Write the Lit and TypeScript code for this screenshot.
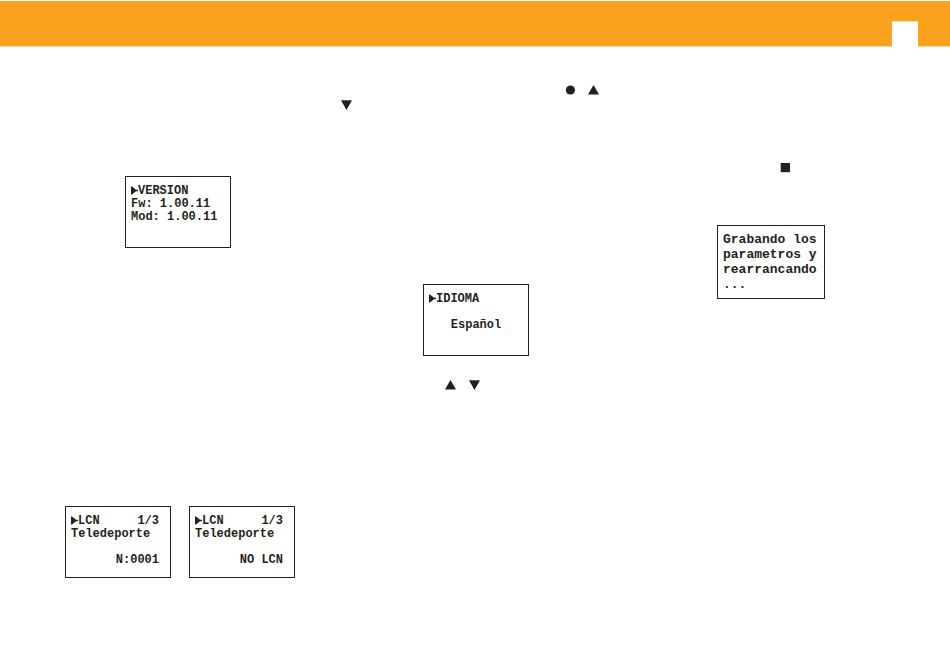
import { LitElement, html, css, svg, nothing } from "lit";
import { customElement, property } from "lit/decorators.js";

type Key = "up" | "down" | "dot" | "stop";

const SHAPES = {
  up: svg`<path d="M5.5 0 L11 9.5 H0 Z" />`,
  down: svg`<path d="M0 0.3 H11 L5.5 10 Z" />`,
  dot: svg`<circle cx="5.4" cy="5" r="4.6" />`,
  stop: svg`<path d="M0.7 0 H10 V9.2 H0.7 Z" />`,
};

@customElement("key-symbol")
export class KeySymbol extends LitElement {
  @property() kind: Key = "up";

  static styles = css`
    :host {
      display: block;
      width: 11px;
      height: 10px;
    }
    .shape {
      display: block;
      fill: #231f20;
    }
  `;

  render() {
    return html`<svg class="shape" width="11" height="10" viewBox="0 0 11 10" aria-hidden="true">
      ${SHAPES[this.kind]}
    </svg>`;
  }
}

interface Line {
  text?: string;
  end?: string;
  cursor?: boolean;
  align?: "center";
}

@customElement("lcd-screen")
export class LcdScreen extends LitElement {
  @property({ attribute: false }) lines: Line[] = [];

  static styles = css`
    :host {
      display: block;
      box-sizing: border-box;
      width: 106px;
      min-height: 72px;
      padding: 8px 11px 8px 5px;
      border: 1px solid #231f20;
      color: #231f20;
      font: bold 12px/13px "Liberation Mono", monospace;
    }
    :host([large]) {
      width: 108px;
      min-height: 74px;
      font-size: 13px;
      line-height: 15px;
      padding: 6px 5px;
    }
    .line {
      display: flex;
      min-height: 13px;
      white-space: pre;
    }
    .center {
      justify-content: center;
      padding-left: 6px;
    }
    .cursor {
      flex: none;
      width: 7px;
      height: 10px;
      fill: #231f20;
    }
    .end {
      margin-left: auto;
    }
  `;

  render() {
    return this.lines.map(
      (l) => html`<div class="line ${l.align ?? ""}">${l.cursor
        ? html`<svg class="cursor" viewBox="0 0 7 10" aria-hidden="true"><path d="M0 1.5 H1 L5 4.8 H7 V6.2 H5 L1 9.5 H0 Z" /></svg>`
        : nothing}${l.text ? html`<span>${l.text}</span>` : nothing}${l.end
        ? html`<span class="end">${l.end}</span>`
        : nothing}</div>`
    );
  }
}

@customElement("app-root")
export class AppRoot extends LitElement {
  static styles = css`
    :host {
      display: block;
      min-height: 100vh;
      background: #fff;
    }
    .banner {
      display: flex;
      justify-content: flex-end;
      align-items: flex-end;
      height: 45px;
      margin-top: 1px;
      padding-right: 32px;
      background: #faa21e;
      border-bottom: 1px solid #fddcab;
    }
    .folio {
      width: 26px;
      height: 25px;
      margin-bottom: -1px;
      background: #fff;
      border-top: 1px solid #fddcab;
    }
    .columns {
      display: grid;
      grid-template-columns: repeat(3, 1fr);
      padding-left: 65px;
    }
    .column {
      display: flex;
      flex-direction: column;
      align-items: flex-start;
    }
    .first {
      padding-top: 53px;
    }
    .second {
      padding-top: 38px;
    }
    .third {
      padding-top: 116px;
    }
    .keys {
      display: flex;
      gap: 13px;
    }
    .first .keys {
      align-self: flex-end;
      margin-right: 8px;
    }
    .second .top {
      margin-left: 205px;
      gap: 12px;
    }
    .second .bottom {
      margin: 24px 0 0 85px;
    }
    .third .keys {
      margin-left: 125px;
    }
    .version {
      margin: 66px 0 258px 60px;
    }
    .pair {
      display: flex;
      gap: 18px;
    }
    .language {
      margin: 189px 0 0 63px;
    }
    .saving {
      margin: 52px 0 0 62px;
    }
  `;

  render() {
    return html`
      <header class="banner"><div class="folio"></div></header>
      <main class="columns">
        <section class="column first">
          <div class="keys"><key-symbol kind="down"></key-symbol></div>
          <lcd-screen
            class="version"
            .lines=${[{ text: "VERSION", cursor: true }, { text: "Fw: 1.00.11" }, { text: "Mod: 1.00.11" }]}
          ></lcd-screen>
          <div class="pair">
            ${["N:0001", "NO LCN"].map(
              (end) => html`<lcd-screen
                .lines=${[{ text: "LCN", end: "1/3", cursor: true }, { text: "Teledeporte" }, {}, { end }]}
              ></lcd-screen>`
            )}
          </div>
        </section>
        <section class="column second">
          <div class="keys top">
            <key-symbol kind="dot"></key-symbol><key-symbol kind="up"></key-symbol>
          </div>
          <lcd-screen
            class="language"
            .lines=${[{ text: "IDIOMA", cursor: true }, {}, { text: "Español", align: "center" }]}
          ></lcd-screen>
          <div class="keys bottom">
            <key-symbol kind="up"></key-symbol><key-symbol kind="down"></key-symbol>
          </div>
        </section>
        <section class="column third">
          <div class="keys"><key-symbol kind="stop"></key-symbol></div>
          <lcd-screen
            class="saving"
            large
            .lines=${[{ text: "Grabando los" }, { text: "parametros y" }, { text: "rearrancando" }, { text: "..." }]}
          ></lcd-screen>
        </section>
      </main>
    `;
  }
}
